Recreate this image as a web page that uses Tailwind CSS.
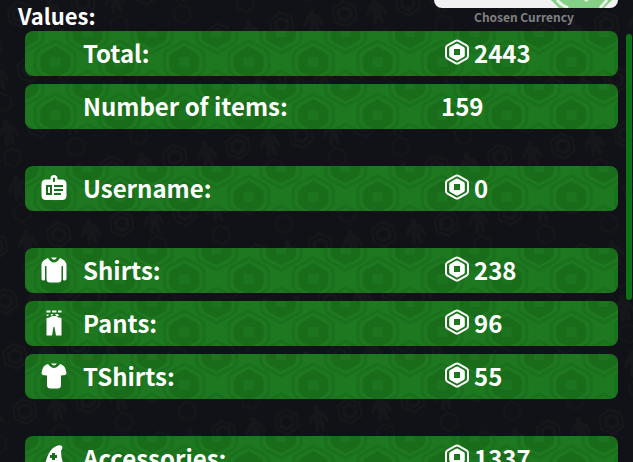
<!DOCTYPE html>
<html lang="en">
<head>
  <meta charset="UTF-8" />
  <title>Values</title>
  <script src="https://cdn.jsdelivr.net/npm/@tailwindcss/browser@4"></script>
</head>
<body class="relative h-screen overflow-hidden bg-[#111217] font-['Noto_Sans_CJK_SC','Open_Sans',sans-serif] font-bold text-white">

  <!-- shared shapes and patterns -->
  <svg class="absolute h-0 w-0" aria-hidden="true">
    <defs>
      <symbol id="coin" viewBox="0 0 26 26">
        <path d="M11.500 1.800 Q13 1 14.500 1.800 L22.500 6.400 Q24 7.300 24 9 V17 Q24 18.700 22.500 19.600 L14.500 24.200 Q13 25 11.500 24.200 L3.500 19.600 Q2 18.700 2 17 V9 Q2 7.300 3.500 6.400 Z" fill="none" stroke="#fff" stroke-width="2" />
        <path fill-rule="evenodd" fill="#fff" d="M12 4.800 Q13 4.200 14 4.800 L19.800 8.100 Q20.800 8.700 20.800 9.800 V16.200 Q20.800 17.300 19.800 17.900 L14 21.200 Q13 21.800 12 21.200 L6.200 17.900 Q5.200 17.300 5.200 16.200 V9.800 Q5.200 8.700 6.200 8.100 Z M10 10 V16 H16 V10 Z" />
      </symbol>
      <g id="bigHex">
        <path d="M0 -21 L15 -13 Q20 -10 20 -6 V6 Q20 10 15 13 L0 21 L-15 13 Q-20 10 -20 6 V-6 Q-20 -10 -15 -13 Z" fill="none" stroke="#1a701c" stroke-width="3" />
        <path d="M0 -16 L12 -9 Q15 -7 15 -4 V4 Q15 7 12 10 L0 16 L-12 10 Q-15 7 -15 4 V-4 Q-15 -7 -12 -9 Z" fill="#196c1a" />
        <path d="M-5 -5 H5 V5 H-5 Z" fill="#1c751e" />
      </g>
      <pattern id="rowPattern" width="64.500" height="60" x="-2" y="1" patternUnits="userSpaceOnUse">
        <rect width="65" height="60" fill="#1d781f" />
        <use href="#bigHex" x="0" y="0" />
        <use href="#bigHex" x="64.500" y="0" />
        <use href="#bigHex" x="0" y="60" />
        <use href="#bigHex" x="64.500" y="60" />
        <use href="#bigHex" x="32.250" y="30" />
      </pattern>
      <pattern id="pagePattern" width="64" height="56" patternUnits="userSpaceOnUse" patternTransform="rotate(-10)">
        <g fill="none" stroke="#16171b" stroke-width="2">
          <path d="M17 5 L28 11 V24 L17 30 L6 24 V11 Z" />
          <path d="M17 11 L23 14 V21 L17 24 L11 21 V14 Z" stroke-width="3" />
        </g>
        <path d="M46 7 h5 v5 l5 3 3 9 -2 1 -4 -7 1 15 h-3 l-2 -9 -2 9 h-3 l1 -15 -5 6 -2 -1 4 -8 4 -3 Z" fill="#16171b" />
        <path d="M49 36 L57 41 V50 L49 55 L41 50 V41 Z" fill="none" stroke="#15161a" stroke-width="2" />
      </pattern>
    </defs>
  </svg>
  <svg class="absolute inset-0 h-full w-full" aria-hidden="true"><rect width="100%" height="100%" fill="url(#pagePattern)" /></svg>

  <main class="relative pr-[15px] pl-[25px]">
    <header class="flex h-[31px] items-start justify-between">
      <h1 class="-ml-[7px] text-[22px] leading-[30px]">Values:</h1>
      <div class="flex w-[184px] flex-col items-center">
        <button class="relative h-2 w-full overflow-hidden rounded-b-2xl bg-[#f1f1f1]" aria-label="Change currency">
          <svg class="absolute top-0 right-1 h-2 w-16" viewBox="0 0 64 8">
            <path d="M1 0 H62 L54 8 H9 Z" fill="#84d086" />
            <path d="M7 0 Q11 5 18 8 M57 0 L50 8" fill="none" stroke="#e9f5e8" stroke-width="3" />
            <path d="M34 0 H39 L36 2 Z" fill="#e9f5e8" />
          </svg>
        </button>
        <span class="pr-1 text-xs leading-[18px] text-[#808083]">Chosen Currency</span>
      </div>
    </header>

    <div class="flex flex-col gap-[37px] text-2xl">
      <section class="flex flex-col gap-2">
        <div class="relative grid h-[45px] grid-cols-[58px_361px_1fr] items-center overflow-hidden rounded-lg pb-0.5">
          <svg class="absolute inset-0 h-full w-full" aria-hidden="true"><rect width="100%" height="100%" fill="url(#rowPattern)" /></svg>
          <span class="relative col-start-2">Total:</span>
          <span class="relative flex items-center gap-1"><svg class="mb-0.5 h-[26px] w-[26px]"><use href="#coin" /></svg>2443</span>
        </div>
        <div class="relative grid h-[45px] grid-cols-[58px_358px_1fr] items-center overflow-hidden rounded-lg pb-0.5">
          <svg class="absolute inset-0 h-full w-full" aria-hidden="true"><rect width="100%" height="100%" fill="url(#rowPattern)" /></svg>
          <span class="relative col-start-2">Number of items:</span>
          <span class="relative">159</span>
        </div>
      </section>

      <section>
        <div class="relative grid h-[45px] grid-cols-[58px_361px_1fr] items-center overflow-hidden rounded-lg pb-0.5">
          <svg class="absolute inset-0 h-full w-full" aria-hidden="true"><rect width="100%" height="100%" fill="url(#rowPattern)" /></svg>
          <svg class="relative ml-4 h-[26px] w-[26px]" viewBox="0 0 26 26">
            <path fill="#fff" fill-rule="evenodd" d="M9.500 4.500 V3.500 A3.500 3.500 0 0 1 16.500 3.500 V4.500 H21 Q25.500 4.500 25.500 9 V20.500 Q25.500 25 21 25 H5 Q0.500 25 0.500 20.500 V9 Q0.500 4.500 5 4.500 Z M12 3 V6.500 Q13 7.500 14 6.500 V3 Q13 2 12 3 Z M5 10 V20 H11 V10 Z M7 12 H9 V18 H7 Z M13 10 V12 H22 V10 Z M13 14 V16 H22 V14 Z M13 18 V20 H20 V18 Z" />
          </svg>
          <span class="relative">Username:</span>
          <span class="relative flex items-center gap-1"><svg class="mb-0.5 h-[26px] w-[26px]"><use href="#coin" /></svg>0</span>
        </div>
      </section>

      <section class="flex flex-col gap-2">
        <div class="relative grid h-[45px] grid-cols-[58px_361px_1fr] items-center overflow-hidden rounded-lg pb-0.5">
          <svg class="absolute inset-0 h-full w-full" aria-hidden="true"><rect width="100%" height="100%" fill="url(#rowPattern)" /></svg>
          <svg class="relative ml-4 h-[26px] w-[26px]" viewBox="0 0 26 26">
            <path fill="#fff" d="M7 1 Q13 10 19 1 Q24.500 3 25.500 7 V22 Q25.500 23.500 23 23.500 L22 23 V9 H20.500 V22 Q20.500 25.500 17 25.500 H9 Q5.500 25.500 5.500 22 V9 H4 V23 L3 23.500 Q0.500 23.500 0.500 22 V7 Q1.500 3 7 1 Z" />
            <path fill="#fff" d="M10 0.500 H16 Q13 5 10 0.500 Z" />
          </svg>
          <span class="relative">Shirts:</span>
          <span class="relative flex items-center gap-1"><svg class="mb-0.5 h-[26px] w-[26px]"><use href="#coin" /></svg>238</span>
        </div>
        <div class="relative grid h-[45px] grid-cols-[58px_361px_1fr] items-center overflow-hidden rounded-lg pb-0.5">
          <svg class="absolute inset-0 h-full w-full" aria-hidden="true"><rect width="100%" height="100%" fill="url(#rowPattern)" /></svg>
          <svg class="relative ml-4 h-[26px] w-[26px]" viewBox="0 0 26 26">
            <path fill="#fff" d="M5.500 0.500 H9.500 V2.500 H5.500 Z M11 0.500 H15.500 V2.500 H11 Z M17 0.500 H20.500 V2.500 H17 Z M5.500 4.500 H8 L7 6 H5.500 Z M9.500 4 H12.500 L10.500 6 Z M14 4 H17 L18 6 H15.500 Z M5.500 8 Q9 8 11 6 H15.500 Q17 8 20.500 8 V25.500 H15 L13.500 17 H12.500 L11 25.500 H5.500 Z" />
          </svg>
          <span class="relative">Pants:</span>
          <span class="relative flex items-center gap-1"><svg class="mb-0.5 h-[26px] w-[26px]"><use href="#coin" /></svg>96</span>
        </div>
        <div class="relative grid h-[45px] grid-cols-[58px_361px_1fr] items-center overflow-hidden rounded-lg pb-0.5">
          <svg class="absolute inset-0 h-full w-full" aria-hidden="true"><rect width="100%" height="100%" fill="url(#rowPattern)" /></svg>
          <svg class="relative ml-4 h-[26px] w-[26px]" viewBox="0 0 26 26">
            <path fill="#fff" d="M7 1 Q13 9 19 1 Q24.500 2 25.500 10 Q25.500 12.500 20 12.500 V22 Q20 25.500 16.500 25.500 H9.500 Q6 25.500 6 22 V12.500 Q0.500 12.500 0.500 10 Q1.500 2 7 1 Z" />
            <path fill="#fff" d="M10 0.500 H16 Q13 4.500 10 0.500 Z" />
          </svg>
          <span class="relative">TShirts:</span>
          <span class="relative flex items-center gap-1"><svg class="mb-0.5 h-[26px] w-[26px]"><use href="#coin" /></svg>55</span>
        </div>
      </section>

      <section>
        <div class="relative grid h-[45px] grid-cols-[58px_361px_1fr] items-center overflow-hidden rounded-lg pb-0.5">
          <svg class="absolute inset-0 h-full w-full" aria-hidden="true"><rect width="100%" height="100%" fill="url(#rowPattern)" /></svg>
          <svg class="relative ml-4 h-[26px] w-[26px]" viewBox="0 0 26 26">
            <path fill="#fff" fill-rule="evenodd" d="M4 19 Q7 7 12 3 Q17 -1 21 1 Q22 3 20 6 Q20 14 23 20 Q25 24 20 24 H5 Q1 24 4 19 Z M11 8 V10 H9 V13 H11 V15 H14 V13 H16 V10 H14 V8 Z" />
          </svg>
          <span class="relative">Accessories:</span>
          <span class="relative flex items-center gap-1"><svg class="mb-0.5 h-[26px] w-[26px]"><use href="#coin" /></svg>1337</span>
        </div>
      </section>
    </div>
  </main>

  <!-- scroll thumb -->
  <div class="absolute top-[34px] right-px h-[266px] w-1.5 rounded-full bg-[#0b7215]"></div>

</body>
</html>
